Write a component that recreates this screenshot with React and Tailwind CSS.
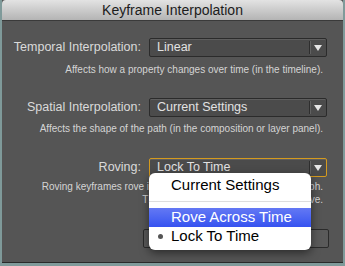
import React from 'react'

const ui = { fontFamily: '"Liberation Sans", Arial, sans-serif' }

function Select({ value, focused }) {
  return (
    <div
      className={`flex h-[19px] w-[178px] items-stretch rounded-[2px] border bg-[#4b4b4b] shadow-[inset_0_1px_0_#5e5e5e] ${
        focused ? 'border-[#d49a1e]' : 'border-[#2b2b2b]'
      }`}
    >
      <div className="flex flex-1 items-center pl-[7px] text-[12.5px] text-[#e2e2e2]">{value}</div>
      <div className="my-[2px] w-px bg-[#2e2e2e] shadow-[1px_0_0_#626262]" />
      <div className="flex w-[16px] items-center justify-center">
        <svg width="8" height="6" viewBox="0 0 8 6">
          <path d="M0 0h8L4 6z" fill="#e6e6e6" />
        </svg>
      </div>
    </div>
  )
}

function Row({ label, value, focused }) {
  return (
    <div className="flex h-[19px] items-center justify-end gap-[8px] pr-[16px]">
      <span className="text-[12.5px] text-[#dadada]">{label}</span>
      <Select value={value} focused={focused} />
    </div>
  )
}

function Note({ children }) {
  return <p className="pr-[20px] text-right text-[10px] leading-[13px] text-[#d4d4d4]">{children}</p>
}

export default function App() {
  return (
    <div className="h-[266px] w-[345px] overflow-hidden bg-[#7f9a9a]" style={ui}>
      <div className="relative mx-[2px] flex h-[263px] w-[341px] flex-col border-b border-[#2a2a2a] bg-[#555555]">
        <div className="flex h-[21px] items-center justify-center rounded-t-[4px] border-b border-[#3a3a3a] bg-gradient-to-b from-[#e3e3e3] to-[#b4b4b4] text-[14px] text-[#1c1c1c]">
          Keyframe Interpolation
        </div>

        <div className="flex flex-col pt-[17px]">
          <Row label="Temporal Interpolation:" value="Linear" />
          <div className="mt-[6px]">
            <Note>Affects how a property changes over time (in the timeline).</Note>
          </div>

          <div className="mt-[22px]">
            <Row label="Spatial Interpolation:" value="Current Settings" />
          </div>
          <div className="mt-[5px]">
            <Note>Affects the shape of the path (in the composition or layer panel).</Note>
          </div>

          <div className="mt-[23px]">
            <Row label="Roving:" value="Lock To Time" focused />
          </div>
          <div className="mt-[3px]">
            <Note>
              Roving keyframes rove in time to create a smooth speed graph.
              <br />
              The first and last keyframes cannot rove.
            </Note>
          </div>

          <div className="mt-[23px] flex justify-end gap-[6px] pr-[14px]">
            <button className="h-[19px] w-[90px] rounded-[2px] border border-[#2b2b2b] bg-[#5a5a5a] text-[12px] text-[#e0e0e0]">
              Cancel
            </button>
            <button className="h-[19px] w-[90px] rounded-[2px] border border-[#2b2b2b] bg-[#5a5a5a] text-[12px] text-[#e0e0e0]">
              OK
            </button>
          </div>
        </div>

        <div className="absolute left-[147px] top-[173px] w-[162px] rounded-[6px] bg-white pt-[3px] pb-[4px] text-[15px] text-black shadow-[0_3px_10px_rgba(0,0,0,0.5)]">
          <div className="flex h-[19px] items-center pl-[22px]">Current Settings</div>
          <div className="my-[6px] h-px bg-[#dedede]" />
          <div className="flex h-[19px] items-center bg-gradient-to-b from-[#6478f4] to-[#3652f0] pl-[22px] text-white">
            Rove Across Time
          </div>
          <div className="relative flex h-[19px] items-center pl-[22px]">
            <span className="absolute left-[9px] top-[7px] h-[5px] w-[5px] rounded-full bg-[#555]" />
            Lock To Time
          </div>
        </div>
      </div>
    </div>
  )
}
